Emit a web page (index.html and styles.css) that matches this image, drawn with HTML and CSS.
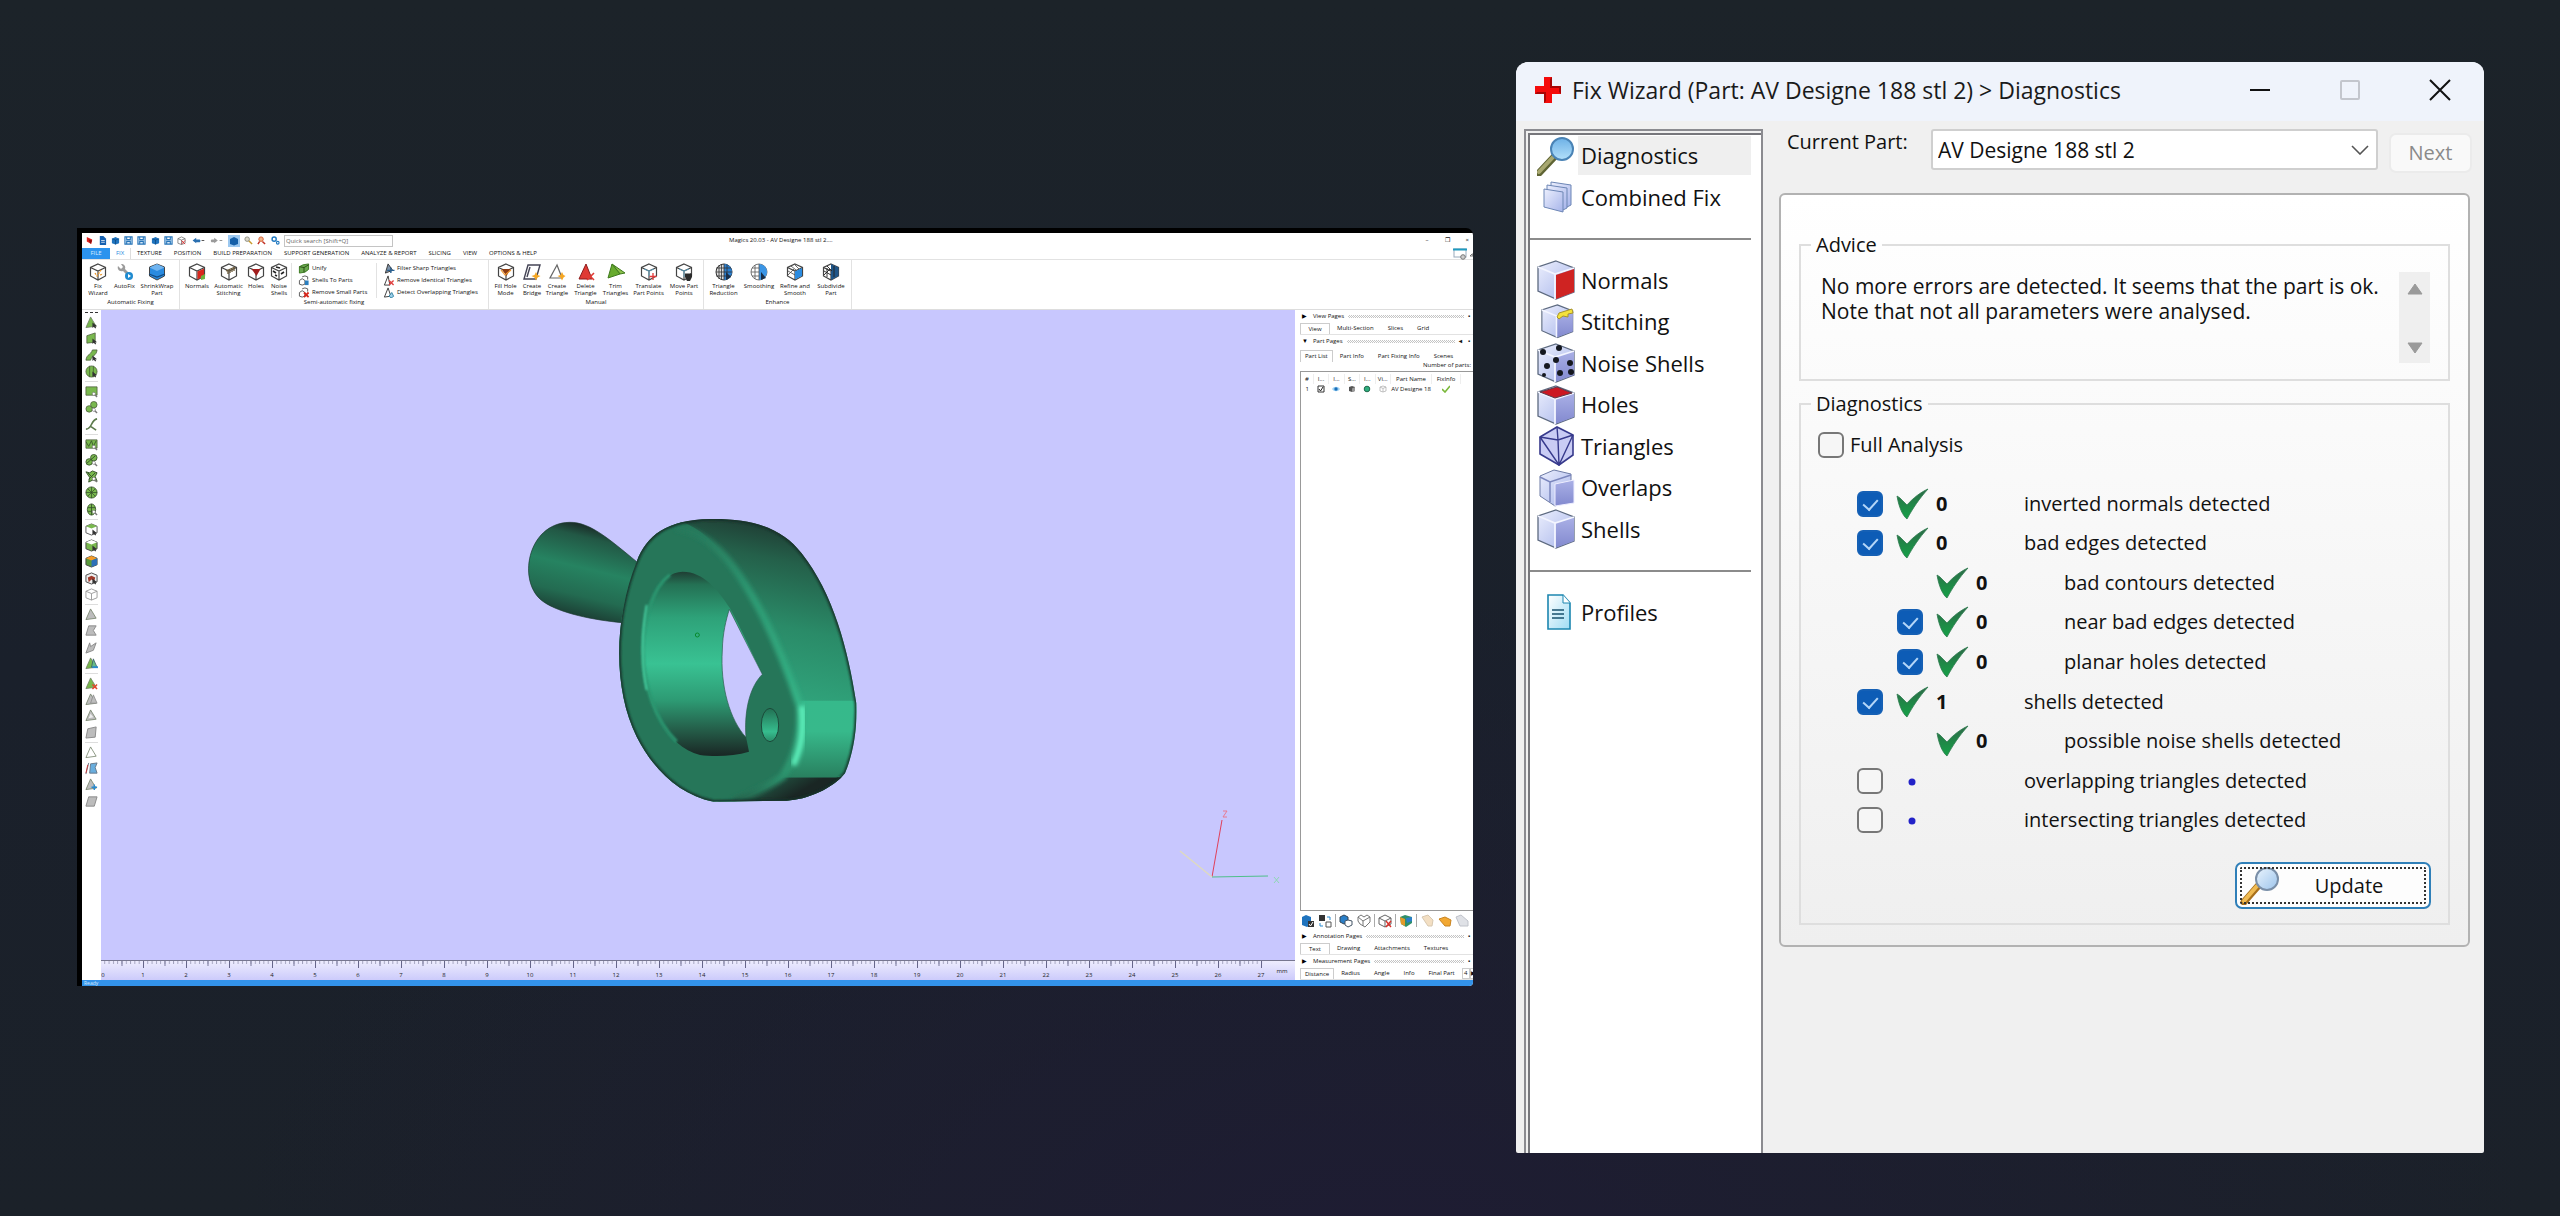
FILE: index.html
```html
<!DOCTYPE html>
<html lang="en">
<head>
<meta charset="utf-8">
<title>Magics – Fix Wizard</title>
<link rel="stylesheet" href="styles.css">
</head>
<body>
<svg class="defs" aria-hidden="true">
  <defs>
    <linearGradient id="lav" x1="0" y1="0" x2="1" y2="1"><stop offset="0" stop-color="#eceffd"/><stop offset="1" stop-color="#a6b4ea"/></linearGradient>
    <linearGradient id="lavd" x1="0" y1="0" x2="0" y2="1"><stop offset="0" stop-color="#aab0e6"/><stop offset="1" stop-color="#8289cf"/></linearGradient>
    <linearGradient id="glass" x1="0" y1="0" x2="0" y2="1"><stop offset="0" stop-color="#6db1e6"/><stop offset="1" stop-color="#b4e0fa"/></linearGradient>
    <linearGradient id="glass2" x1="0" y1="0" x2="1" y2="1"><stop offset="0" stop-color="#eaf4fd"/><stop offset="1" stop-color="#9cc4ec"/></linearGradient>
    <linearGradient id="tick" x1="0" y1="0" x2="0" y2="1"><stop offset="0" stop-color="#2d6a48"/><stop offset="1" stop-color="#14a146"/></linearGradient>
    <linearGradient id="page" x1="0" y1="0" x2="1" y2="1"><stop offset="0" stop-color="#ffffff"/><stop offset="1" stop-color="#9fdcf4"/></linearGradient>
  </defs>
  <symbol id="cube" viewBox="0 0 18 18"><path d="M9 1 16.500 4.500V13L9 17 1.500 13V4.500Z" fill="#fff"/><path d="M9 1 16.500 4.500V13L9 17 1.500 13V4.500ZM1.500 4.500 9 8 16.500 4.500M9 8V17" fill="none" stroke="#444" stroke-width="1.200"/></symbol>
  <symbol id="tri" viewBox="0 0 14 14"><path d="M6 1 1 12.500 12 11Z" fill="currentColor" stroke="#6a7a60" stroke-width=".8"/></symbol>
  <symbol id="cursor" viewBox="0 0 14 14"><path d="M8 7v6l1.500-1.500L11 13.500l1-.8-1-1.600H13z" fill="#333"/></symbol>
  <symbol id="lens" viewBox="0 0 14 14"><path d="M10 10l3 3" stroke="#777" stroke-width="1.500"/><circle cx="9.500" cy="9.500" r="1.700" fill="#fff" stroke="#777" stroke-width=".7"/></symbol>
  <symbol id="box" viewBox="0 0 38 40"><path d="M19 1 37 8V32L19 39 1 31V7Z" fill="url(#lav)" stroke="#5d6a80" stroke-width="1.300"/><path d="M18 14 37 8V32L18 39Z" fill="url(#lavd)"/><path d="M1 7 18 14 37 8M18 14V39" fill="none" stroke="#f3f5ff" stroke-width="1.800"/></symbol>
  <symbol id="ok" viewBox="0 0 33 32"><path d="M1 8 4 10 11 17C17 10 25 4 32 1 23 11 17 20 11 31 7 28 3 20 1 8Z" fill="url(#tick)" stroke="#2d7a4e" stroke-width=".8"/></symbol>
  <symbol id="save" viewBox="0 0 10 10"><path d="M1 1h8v8H1zM3 1v3h4V1M3 9V6h4v3" fill="#d5e8f8" stroke="#2674b8" stroke-width="1.200"/></symbol>
  <symbol id="bluecube" viewBox="0 0 10 10"><path d="M1 3 5 1l4 2v5L5 9.500 1 8z" fill="#1e73be"/><path d="M1 3l4 1.500L9 3M5 4.500v5" fill="none" stroke="#0d4173" stroke-width=".7"/></symbol>
</svg>

<main class="stage">
<section class="app" aria-label="Magics">
 <div class="app-body">
  <header class="app-title">
    <div class="quick">
      <svg viewBox="0 0 10 10"><path d="M2 1l6 3-1 5-5-3z" fill="#e0201b"/><path d="M4 4l4 1-2 4z" fill="#8a0f0f"/></svg>
      <svg viewBox="0 0 10 10"><path d="M2 0h4l3 3v7H2z" fill="#1661b0"/><path d="M3.500 5h4M3.500 7h4" stroke="#fff" stroke-width=".8"/></svg>
      <svg><use href="#bluecube"/></svg><svg><use href="#save"/></svg><svg><use href="#save"/></svg>
    </div>
    <div class="quick">
      <svg><use href="#bluecube"/></svg><svg><use href="#save"/></svg>
      <svg viewBox="0 0 10 10"><path d="M1 3 5 1l4 2v5L5 9.500 1 8zM1 3l4 1.500L9 3M5 4.500v5" fill="#fff" stroke="#666" stroke-width=".8"/><path d="M5 5l4 4M9 5l-4 4" stroke="#e03030"/></svg>
    </div>
    <div class="quick wide">
      <svg viewBox="0 0 14 10"><path d="M1 5l4-3v2h4c1 1 1 2 0 3H5v1z" fill="#2a6fb0"/><path d="M11 5h3" stroke="#444"/></svg>
      <svg viewBox="0 0 14 10"><path d="M9 5L5 2v2H2C1 5 1 6 2 7h3v1z" fill="#9a9a9a"/><path d="M11 5h3" stroke="#888"/></svg>
    </div>
    <div class="quick">
      <svg class="on" viewBox="0 0 10 10"><path d="M1 3 5 1l4 2v5L5 9.500 1 8z" fill="#155fa8"/></svg>
      <svg viewBox="0 0 10 10"><path d="M5 5l4 4" stroke="#c89a2c" stroke-width="1.600"/><circle cx="3.500" cy="3.500" r="2.500" fill="#dcd8c8" stroke="#8a8a80"/></svg>
      <svg viewBox="0 0 10 10"><path d="M3 6l-2 3M6 6l3 3" stroke="#c03024" stroke-width="1.600"/><circle cx="4.500" cy="3.500" r="2.500" fill="#f0b48a" stroke="#d65a30"/></svg>
    </div>
    <div class="quick">
      <svg viewBox="0 0 10 10"><circle cx="3.500" cy="3.500" r="2.300" fill="none" stroke="#1f78c0" stroke-width="1.600"/><circle cx="7.500" cy="7.500" r="1.500" fill="none" stroke="#1f78c0" stroke-width="1.200"/></svg>
      <input class="search" type="text" aria-label="Quick search" placeholder="Quick search [Shift+Q]">
    </div>
    <h1 class="app-name">Magics 20.03 - AV Designe 188 stl 2....</h1>
    <div class="app-ctl"><button>–</button><button>❐</button><button>×</button></div>
  </header>

  <nav class="tabs">
    <button class="file">FILE</button><button class="fix">FIX</button>
    <button>TEXTURE</button><button>POSITION</button><button>BUILD PREPARATION</button><button>SUPPORT GENERATION</button><button>ANALYZE &amp; REPORT</button><button>SLICING</button><button>VIEW</button><button>OPTIONS &amp; HELP</button>
    <svg class="tabs-end" viewBox="0 0 20 12"><rect x="1" y="1" width="12" height="8" fill="#fff" stroke="#9ab"/><path d="M0 1.500h14" stroke="#1f9ac0" stroke-width="2"/><circle cx="10" cy="9" r="2.300" fill="#ccc" stroke="#777"/><path d="M17 8l2-2h1v2z" fill="none" stroke="#555" stroke-width=".8"/></svg>
  </nav>

  <div class="ribbon">
    <section class="group g-auto">
      <div class="tools">
        <button><svg viewBox="0 0 18 18"><use href="#cube"/><path d="M6 10l2 3 4-6M11 12l3-1" stroke="#e8962c" stroke-width="1.300" stroke-dasharray="2 1" fill="none"/></svg>Fix<br>Wizard</button>
        <button><svg viewBox="0 0 18 18"><path d="M2 3l3 3 2-2-2-3c3 0 5 2 4 5l5 5-2 2-5-5C3 9 1 6 2 3z" fill="#9c9c9c"/><circle cx="13" cy="13" r="4" fill="#1f8bd0"/><path d="M12 11v4l3-2z" fill="#fff"/></svg>AutoFix</button>
        <button><svg viewBox="0 0 18 18"><path d="M9 1l7.500 3v9L9 17l-7.500-4V4z" fill="#2a8be0" stroke="#444"/><path d="M1.500 4.500L9 8l7.500-3.500L9 1z" fill="#6fb4f0"/><path d="M1 11l8 3 8-3" fill="none" stroke="#124a80" stroke-width="1.200"/></svg>ShrinkWrap<br>Part</button>
      </div>
      <h2>Automatic Fixing</h2>
    </section>
    <section class="group g-semi">
      <div class="tools">
        <button><svg viewBox="0 0 18 18"><use href="#cube"/><path d="M9.500 8.500 16 5.500V13l-6.500 3.500z" fill="#d8271c"/><path d="M13 13l4-2v5l-4 1z" fill="#6cb33f"/></svg>Normals</button>
        <button><svg viewBox="0 0 18 18"><use href="#cube"/><path d="M6 8l9-4M8 8v3M10 7v3M12 6v3M14 5v3" stroke="#6b5a3a" stroke-width="1.300"/></svg>Automatic<br>Stitching</button>
        <button><svg viewBox="0 0 18 18"><use href="#cube"/><path d="M4.500 6h9L9.500 13z" fill="#a11d1d"/></svg>Holes</button>
        <button><svg viewBox="0 0 18 18"><use href="#cube"/><path d="M3 8l3 2M11 11l3-2M6 4l4 1M5 12l2 1" stroke="#222" stroke-width="1.600"/></svg>Noise<br>Shells</button>
        <div class="list">
          <button><svg viewBox="0 0 12 12"><path d="M1 4l4-2 6-1v6L7 10 1 11z" fill="#6aa84f" stroke="#38761d"/><path d="M1 4l5 1 5-3M6 5v5" stroke="#274e13" fill="none"/></svg>Unify</button>
          <button><svg viewBox="0 0 12 12"><path d="M1 6l3-2 3 2v4l-3 1-3-1zM4 2l3-1 3 1v3" fill="#fff" stroke="#555"/><path d="M7 6h4v5H7z" fill="#2a7fc0"/></svg>Shells To Parts</button>
          <button><svg viewBox="0 0 12 12"><path d="M1 6l3-2 3 2v4l-3 1-3-1zM4 2l3-1 3 1v3" fill="#fff" stroke="#555"/><path d="M6 6l5 5M11 6l-5 5" stroke="#d8271c" stroke-width="2"/></svg>Remove Small Parts</button>
        </div>
        <div class="list">
          <button><svg viewBox="0 0 12 12"><path d="M5 1L2 11l8-3z" fill="#7f93a8" stroke="#333"/><path d="M4 8h8M8 5v6" stroke="#2a6090" stroke-width="1.500"/></svg>Filter Sharp Triangles</button>
          <button><svg viewBox="0 0 12 12"><path d="M5 1L1 11h6z" fill="#fff" stroke="#333"/><path d="M6 6l5 5M11 6l-5 5" stroke="#e04040" stroke-width="1.500"/></svg>Remove Identical Triangles</button>
          <button><svg viewBox="0 0 12 12"><path d="M5 1L1 11l7-1z" fill="#fff" stroke="#333"/><path d="M6 10l3-4 2 4c-1 2-4 2-5 0z" fill="#9fd0ea" stroke="#2a7fa0"/></svg>Detect Overlapping Triangles</button>
        </div>
      </div>
      <h2>Semi-automatic fixing</h2>
    </section>
    <section class="group g-manual">
      <div class="tools">
        <button><svg viewBox="0 0 18 18"><use href="#cube"/><path d="M4.500 6h9L9.500 13z" fill="#8a3b12"/><path d="M4 7l4 5 6-5" stroke="#f09a30" fill="none" stroke-width="1.200"/></svg>Fill Hole<br>Mode</button>
        <button><svg viewBox="0 0 18 18"><path d="M5 2h12l-4 14H1zM7 4L4 14" fill="#fff" stroke="#445" stroke-width="1.400"/><path d="M13 9l1.500 3 3 1-3 1.500-1.500 3-1.500-3-3-1.500 3-1z" fill="#f5a623"/></svg>Create<br>Bridge</button>
        <button><svg viewBox="0 0 18 18"><path d="M9 2L2 15h12z" fill="#fff" stroke="#666" stroke-width="1.200"/><path d="M14 9l1.500 3 2 1-2 1.500-1.500 3-1.500-3-3-1.500 3-1z" fill="#f5a623"/></svg>Create<br>Triangle</button>
        <button><svg viewBox="0 0 18 18"><path d="M9 1L2 16h13z" fill="#e03a34" stroke="#8d1b1b"/><path d="M10 10l7 7M17 10l-7 7" stroke="#e03a34" stroke-width="1.600"/></svg>Delete<br>Triangle</button>
        <button><svg viewBox="0 0 18 18"><path d="M5 1l13 9-5 1z" fill="#8bbf4a" stroke="#3f7a1e"/><path d="M5 1L1 15l12-4z" fill="#67ab2e" stroke="#3f7a1e"/></svg>Trim<br>Triangles</button>
        <button><svg viewBox="0 0 18 18"><use href="#cube"/><path d="M9 8v6M4 6l5 2 5-2" stroke="#5aa6c8" stroke-width=".8" fill="none"/><path d="M13 10v7M9.500 13.500h7" stroke="#e23a3a" stroke-width="1.300"/></svg>Translate<br>Part Points</button>
        <button><svg viewBox="0 0 18 18"><use href="#cube"/><path d="M9 8v6M4 6l5 2 5-2" stroke="#5aa6c8" stroke-width=".8" fill="none"/><path d="M10 11l1-1 1 1 1-1 1 1 1-1 2 1v3l-2 4h-3l-2-4z" fill="#2b2b2b"/></svg>Move Part<br>Points</button>
      </div>
      <h2>Manual</h2>
    </section>
    <section class="group g-enh">
      <div class="tools">
        <button><svg viewBox="0 0 18 18"><circle cx="9" cy="9" r="8" fill="#ddd" stroke="#333"/><path d="M9 1a8 8 0 010 16z" fill="#2a7fd0"/><path d="M4 2v14M6.500 1v16M9 1v16M12 2v14M1 5h15M1 9h16M1 13h15" stroke="#333" stroke-width=".8"/><path d="M11 9v8l5-3z" fill="#1a2f48"/></svg>Triangle<br>Reduction</button>
        <button><svg viewBox="0 0 18 18"><circle cx="9" cy="9" r="8" fill="#fff" stroke="#777"/><path d="M9 1a8 8 0 010 16z" fill="#3a95e6"/><path d="M5 2v14M9 1v16M1 9h8M2 5h7M2 13h7" stroke="#555" stroke-width=".8"/><path d="M11 9v8l5-2z" fill="#1a2f48"/></svg>Smoothing</button>
        <button><svg viewBox="0 0 18 18"><use href="#cube"/><path d="M9 8.500l7-3.500v8L9 16.500z" fill="#2a8be0"/><path d="M2 8l7 4M2 12l6-6M5 3l5 4M9 2l4 4" stroke="#444" stroke-width=".8"/></svg>Refine and<br>Smooth</button>
        <button><svg viewBox="0 0 18 18"><use href="#cube"/><path d="M9 1l7.500 3.500V13L9 17z" fill="#1f5588"/><path d="M2 8l7 4M2 12l6-6M5 3l5 5M5 5v9M12 3v11" stroke="#222" stroke-width=".9"/></svg>Subdivide<br>Part</button>
      </div>
      <h2>Enhance</h2>
    </section>
  </div>

  <div class="work">
    <aside class="rail" aria-label="Marking tools">
      <i class="grip"></i>
      <svg class="g" viewBox="0 0 14 14"><use href="#tri"/><use href="#cursor"/></svg>
      <svg class="g" viewBox="0 0 14 14"><path d="M2 4l9-3v10l-9 1z" fill="currentColor" stroke="#4a5a3a" stroke-width=".8"/><use href="#cursor"/></svg>
      <svg class="g" viewBox="0 0 14 14"><path d="M1 12C2 5 6 7 8 1h5c-1 7-5 5-7 11z" fill="currentColor" stroke="#4a5a3a" stroke-width=".8"/><use href="#cursor"/></svg>
      <svg class="g" viewBox="0 0 14 14"><circle cx="7" cy="7" r="6" fill="currentColor" stroke="#4a5a3a" stroke-width=".8"/><path d="M5 1v12M9 1v12" stroke="#3d5a2a" stroke-width=".8"/><use href="#cursor"/></svg>
      <hr>
      <svg class="g" viewBox="0 0 14 14"><path d="M1 2h12v9H1z" fill="currentColor" stroke="#4a5a3a" stroke-width=".8"/><use href="#lens"/></svg>
      <svg class="g" viewBox="0 0 14 14"><circle cx="4.500" cy="8.500" r="3.500" fill="currentColor" stroke="#4a5a3a" stroke-width=".8"/><circle cx="9.500" cy="4" r="3.500" fill="currentColor" stroke="#4a5a3a" stroke-width=".8"/><use href="#lens"/></svg>
      <svg class="g" viewBox="0 0 14 14"><path d="M1 12c7 0 5-10 12-11M6 9l6 4" fill="none" stroke="#5c7a4c" stroke-width="1.800"/></svg>
      <hr>
      <svg class="g" viewBox="0 0 14 14"><path d="M1 2h12v9H1z" fill="currentColor" stroke="#4a5a3a" stroke-width=".8"/><path d="M1 4l3 5 3-6 2 6 3-6" fill="none" stroke="#35502a" stroke-width=".9"/><use href="#lens"/></svg>
      <svg class="g" viewBox="0 0 14 14"><circle cx="4.500" cy="8.500" r="3.500" fill="currentColor" stroke="#35502a" stroke-width=".9"/><circle cx="9.500" cy="4" r="3.500" fill="currentColor" stroke="#35502a" stroke-width=".9"/><path d="M2 10l9-8" stroke="#35502a"/><use href="#lens"/></svg>
      <svg class="g" viewBox="0 0 14 14"><path d="M1 2l4 1 3-2 5 2-2 4 2 5-5-1-4 2 1-5z" fill="currentColor" stroke="#35502a"/><path d="M3 3l8 8M11 3l-7 7" stroke="#35502a"/><use href="#lens"/></svg>
      <svg class="g" viewBox="0 0 14 14"><circle cx="7" cy="7" r="6" fill="currentColor" stroke="#35502a" stroke-width=".9"/><path d="M7 1v12M1 7h12M3 3l8 8M11 3l-8 8" stroke="#35502a" stroke-width=".8"/></svg>
      <svg class="g" viewBox="0 0 14 14"><ellipse cx="7" cy="7" rx="4.500" ry="6" fill="currentColor" stroke="#35502a" stroke-width=".9"/><path d="M7 1v12M3 5h8M3 9h8" stroke="#35502a" stroke-width=".9"/><use href="#lens"/></svg>
      <hr>
      <svg class="g" viewBox="0 0 14 14"><path d="M7 1l6 2.500v7L7 13l-6-2.500v-7z" fill="#fff" stroke="#555"/><path d="M7 1l6 2.500L7 6 1 3.500z" fill="currentColor"/><use href="#cursor"/></svg>
      <svg class="g" viewBox="0 0 14 14"><path d="M7 1l6 2.500v7L7 13l-6-2.500v-7z" fill="currentColor" stroke="#444"/><path d="M7 1l6 2.500L7 6 1 3.500z" fill="#fff"/><use href="#cursor"/></svg>
      <svg class="g" viewBox="0 0 14 14"><path d="M7 1l6 2.500v7L7 13l-6-2.500v-7z" fill="#5a9a3c" stroke="#444"/><path d="M7 1l6 2.500L7 6 1 3.500z" fill="#f39a2b"/><path d="M7 6l6-2.500v7L7 13z" fill="#2c6fb8"/></svg>
      <svg class="g" viewBox="0 0 14 14"><path d="M7 1l6 2.500v7L7 13l-6-2.500v-7z" fill="#eee" stroke="#444"/><path d="M3 6l4-2 4 2-1 4-3-2-3 3z" fill="#a03a2a"/><use href="#cursor"/></svg>
      <svg class="n" viewBox="0 0 14 14"><path d="M7 1l6 2.500v7L7 13l-6-2.500v-7zM1 3.500L7 6l6-2.500M7 6v7" fill="#fff" stroke="#999"/></svg>
      <hr>
      <svg class="n" viewBox="0 0 14 14"><use href="#tri"/></svg>
      <svg class="n" viewBox="0 0 14 14"><path d="M4 2h8l-3 5 3 5H1z" fill="currentColor" stroke="#888"/></svg>
      <svg class="n" viewBox="0 0 14 14"><path d="M5 2l1 4 6-4-3 8-8 3z" fill="currentColor" stroke="#888"/></svg>
      <svg class="g" viewBox="0 0 14 14"><use href="#tri"/><path d="M9 2l-2 9h6z" fill="#6b8" stroke="#356" stroke-width=".8"/><path d="M8 10h6v2H8z" fill="#2a8bd0"/></svg>
      <hr>
      <svg class="g" viewBox="0 0 14 14"><use href="#tri"/><path d="M8 8l5 5M13 8l-5 5" stroke="#e5452c" stroke-width="1.600"/></svg>
      <svg class="n" viewBox="0 0 14 14"><use href="#tri"/><path d="M9 2l-3 9h7z" fill="currentColor" stroke="#888" stroke-width=".8"/></svg>
      <svg class="n" viewBox="0 0 14 14"><use href="#tri"/><path d="M6 5l-2 5 5-1z" fill="#eee"/></svg>
      <svg class="n" viewBox="0 0 14 14"><path d="M3 3l9-2-1 11-10 1z" fill="currentColor" stroke="#888"/></svg>
      <hr>
      <svg class="w" viewBox="0 0 14 14"><use href="#tri"/></svg>
      <svg class="n" viewBox="0 0 14 14"><path d="M4 1L1 13M6 2l7-1-2 5 2 6H5z" fill="#69aede" stroke="#678"/><path d="M3 3l-2 9" stroke="#c33"/></svg>
      <svg class="n" viewBox="0 0 14 14"><use href="#tri"/><path d="M10 7v6M7 10h6" stroke="#2a8bd0" stroke-width="1.600"/></svg>
      <svg class="n" viewBox="0 0 14 14"><path d="M4 2h9l-3 10H1z" fill="currentColor" stroke="#888"/></svg>
    </aside>

    <div class="view">
      <svg class="scene" viewBox="101 310 1194 650" role="img" aria-label="Part AV Designe 188 stl 2">
        <defs>
          <linearGradient id="hand" gradientUnits="userSpaceOnUse" x1="290" y1="115" x2="225" y2="385"><stop offset="0" stop-color="#1b2f2a"/><stop offset=".12" stop-color="#225845"/><stop offset=".45" stop-color="#268361"/><stop offset=".75" stop-color="#236b51"/><stop offset="1" stop-color="#1b3a31"/></linearGradient>
          <linearGradient id="side" gradientUnits="userSpaceOnUse" x1="850" y1="100" x2="740" y2="640"><stop offset="0" stop-color="#1f3a32"/><stop offset=".2" stop-color="#24604a"/><stop offset=".55" stop-color="#2a8b68"/><stop offset="1" stop-color="#31a77e"/></linearGradient>
          <linearGradient id="wall" gradientUnits="userSpaceOnUse" x1="0" y1="245" x2="0" y2="798"><stop offset="0" stop-color="#1f3d33"/><stop offset=".07" stop-color="#247154"/><stop offset=".25" stop-color="#2ea279"/><stop offset=".5" stop-color="#39c293"/><stop offset=".7" stop-color="#2d9a73"/><stop offset=".88" stop-color="#235543"/><stop offset="1" stop-color="#192624"/></linearGradient>
          <linearGradient id="under" gradientUnits="userSpaceOnUse" x1="800" y1="850" x2="850" y2="935"><stop offset="0" stop-color="#24604a"/><stop offset="1" stop-color="#1a2624"/></linearGradient>
          <linearGradient id="cap" gradientUnits="userSpaceOnUse" x1="0" y1="632" x2="0" y2="862"><stop offset="0" stop-color="#36b98b"/><stop offset=".4" stop-color="#37b98b"/><stop offset="1" stop-color="#29805f"/></linearGradient>
          <linearGradient id="ridge" gradientUnits="userSpaceOnUse" x1="0" y1="112" x2="0" y2="935"><stop offset="0" stop-color="#27785b"/><stop offset=".25" stop-color="#2d9a73"/><stop offset=".65" stop-color="#35b386"/><stop offset=".9" stop-color="#2c946e"/><stop offset="1" stop-color="#24604a"/></linearGradient>
          <linearGradient id="pin" x1="0" y1="0" x2="0" y2="1"><stop offset="0" stop-color="#227053"/><stop offset=".7" stop-color="#36bd8e"/><stop offset="1" stop-color="#2a8b68"/></linearGradient>
          <filter id="soft" x="-20%" y="-20%" width="140%" height="140%"><feGaussianBlur stdDeviation="7"/></filter>
          <filter id="soft2" x="-50%" y="-20%" width="200%" height="140%"><feGaussianBlur stdDeviation="3"/></filter>
          <clipPath id="outline"><path d="M410 215C440 135 500 90 630 87 770 85 850 120 905 190 1000 310 1045 480 1069 640 1072 720 1060 790 1035 850 1000 895 920 930 860 932L640 935C540 915 460 840 410 740 340 600 340 390 410 215Z"/></clipPath>
        </defs>
        <g transform="translate(500 490) scale(.33333)">
          <path d="M208 97C270 95 330 150 410 215L366 398C280 390 180 370 130 335 50 280 80 100 208 97Z" fill="url(#hand)" stroke="#1c3a31" stroke-width="2"/>
          <g clip-path="url(#outline)">
            <path d="M340 80H1080V940H340Z" fill="url(#side)"/>
            <path d="M850 862H1050V940H640Z" fill="url(#under)"/>
            <path d="M895 632H1072V700L1035 850 1010 862H850Z" fill="url(#cap)"/>
            <path d="M340 80H480C620 90 700 220 790 380 835 470 870 560 897 650 905 740 890 800 850 862 800 900 740 925 690 940H340Z" fill="#267659"/>
            <path d="M530 112C640 130 715 235 790 380 835 470 870 560 900 650 905 740 885 800 848 860 790 900 740 920 700 935" fill="none" stroke="url(#ridge)" stroke-width="22" filter="url(#soft)"/>
            <path d="M906 648C912 720 905 770 880 825" fill="none" stroke="#5df0bb" stroke-width="18" filter="url(#soft)"/>
            <path d="M410 215C440 135 500 90 630 87 770 85 850 120 905 190 1000 310 1045 480 1069 640 1072 720 1060 790 1035 850 1000 895 920 930 860 932L640 935C540 915 460 840 410 740 340 600 340 390 410 215Z" fill="none" stroke="#183029" stroke-width="10" filter="url(#soft2)"/>
          </g>
          <path d="M548 245C610 245 655 300 690 355 740 450 765 510 787 553 750 590 732 660 738 740L747 785C700 800 640 800 600 795 500 770 428 640 428 480 430 350 480 245 548 245Z" fill="url(#wall)"/>
          <path d="M510 255C460 290 430 380 428 480 430 590 465 690 530 755" fill="none" stroke="#2b9670" stroke-width="10" filter="url(#soft2)"/>
          <path d="M440 345C424 430 424 530 440 600" fill="none" stroke="#4cdcaa" stroke-width="5" filter="url(#soft2)"/>
          <path d="M688 358 787 553C750 590 732 660 738 742 690 690 660 590 667 480 668 430 678 390 688 358Z" fill="#c8c7fe" stroke="#2a5a4a" stroke-width="2"/>
          <ellipse cx="810" cy="705" rx="26" ry="50" fill="url(#pin)" stroke="#1c4a3a" stroke-width="3"/>
          <circle cx="592" cy="435" r="6" fill="none" stroke="#078a2c" stroke-width="3"/>
        </g>
        <g fill="none" stroke-width="1">
          <path d="M1212 877 1222 820" stroke="#e0405a"/><path d="M1212 877 1268 876" stroke="#4fbf8a"/><path d="M1212 877 1180 851" stroke="#dedac0" stroke-width="1.500"/>
          <path d="M1223 811h4l-4 6h4" stroke="#e87a90"/><path d="M1274 877l5 6M1279 877l-5 6" stroke="#8fd8b4"/>
        </g>
      </svg>
      <svg class="ruler" viewBox="101 960 1194 20" aria-label="Ruler, mm">
        <defs>
          <linearGradient id="rul" x1="0" y1="0" x2="0" y2="1"><stop offset="0" stop-color="#efeefe"/><stop offset="1" stop-color="#cccbfb"/></linearGradient>
          <pattern id="t1" patternUnits="userSpaceOnUse" x="100" y="960" width="4.300" height="20"><path d="M.5 0V4" stroke="#8a8aa8" stroke-width=".8"/></pattern>
          <pattern id="t5" patternUnits="userSpaceOnUse" x="100" y="960" width="21.500" height="20"><path d="M.5 0V6" stroke="#77779a"/></pattern>
          <pattern id="t10" patternUnits="userSpaceOnUse" x="100" y="960" width="43" height="20"><path d="M.5 0V8" stroke="#66668a"/></pattern>
        </defs>
        <path d="M101 960H1295V980H101Z" fill="url(#rul)"/>
        <path d="M101 960H1263V980H101Z" fill="url(#t1)"/><path d="M101 960H1263V980H101Z" fill="url(#t5)"/><path d="M101 960H1263V980H101Z" fill="url(#t10)"/>
        <path d="M101 960.500H1295" stroke="#777790"/>
        <g class="nums"><text x="103" y="977">0</text><text x="143" y="977">1</text><text x="186" y="977">2</text><text x="229" y="977">3</text><text x="272" y="977">4</text><text x="315" y="977">5</text><text x="358" y="977">6</text><text x="401" y="977">7</text><text x="444" y="977">8</text><text x="487" y="977">9</text><text x="530" y="977">10</text><text x="573" y="977">11</text><text x="616" y="977">12</text><text x="659" y="977">13</text><text x="702" y="977">14</text><text x="745" y="977">15</text><text x="788" y="977">16</text><text x="831" y="977">17</text><text x="874" y="977">18</text><text x="917" y="977">19</text><text x="960" y="977">20</text><text x="1003" y="977">21</text><text x="1046" y="977">22</text><text x="1089" y="977">23</text><text x="1132" y="977">24</text><text x="1175" y="977">25</text><text x="1218" y="977">26</text><text x="1261" y="977">27</text><text x="1282" y="973">mm</text></g>
      </svg>
    </div>

    <aside class="pages">
      <h3 class="bar"><span class="arrow">▶</span>View Pages<i></i><b>▪</b></h3>
      <div class="ptabs"><button class="on">View</button><button>Multi-Section</button><button>Slices</button><button>Grid</button></div>
      <h3 class="bar"><span class="arrow">▼</span>Part Pages<i></i><b>◂</b><b>▪</b></h3>
      <div class="ptabs roomy"><button class="on">Part List</button><button>Part Info</button><button>Part Fixing Info</button><button>Scenes</button></div>
      <p class="count">Number of parts:</p>
      <div class="parts">
        <table>
          <thead><tr><th>#</th><th>I...</th><th>I...</th><th>S...</th><th>I...</th><th>Vi...</th><th>Part Name</th><th>FixInfo</th></tr></thead>
          <tbody><tr><td>1</td>
            <td><svg viewBox="0 0 8 8"><path d="M1 1h6v6H1z" fill="#fff" stroke="#333"/><path d="M2 4l1.500 2L6 2" fill="none" stroke="#222"/></svg></td>
            <td><svg viewBox="0 0 8 8"><path d="M0 4c2-3 6-3 8 0-2 3-6 3-8 0z" fill="#9fd3f5"/><circle cx="4" cy="4" r="1.700" fill="#1b6fb8"/></svg></td>
            <td><svg viewBox="0 0 8 8"><path d="M1 2l3-1 3 1v4L4 7 1 6z" fill="#555"/><path d="M4 3.500L7 2v4L4 7z" fill="#999"/></svg></td>
            <td><svg viewBox="0 0 8 8"><circle cx="4" cy="4" r="2.800" fill="#2fae7e" stroke="#1f6a4c"/></svg></td>
            <td><svg viewBox="0 0 8 8"><path d="M1 2l3-1 3 1v4L4 7 1 6zM1 2l3 1.500L7 2M4 3.500V7" fill="none" stroke="#aaa" stroke-width=".7"/></svg></td>
            <td>AV Designe 18</td>
            <td><svg viewBox="0 0 8 8"><path d="M0 4l3 3 5-6" fill="none" stroke="#7ab83a" stroke-width="1.600"/></svg></td></tr></tbody>
        </table>
      </div>
      <div class="ptools">
        <svg viewBox="0 0 14 14"><path d="M1 3l4-2 5 2v8l-4 2-5-2z" fill="#1e73be"/><path d="M7 7h6v6H7z" fill="#333"/><path d="M8 10l1.500 2L12 8" stroke="#fff" fill="none"/></svg>
        <svg viewBox="0 0 14 14"><path d="M1 1h6v6H1z" fill="#333"/><path d="M8 8h5v5H8z" fill="#fff" stroke="#555"/><path d="M9 3h3v3M2 9v3h3" fill="none" stroke="#2a8bd0"/></svg><hr>
        <svg viewBox="0 0 14 14"><path d="M1 3l4-2 4 2v5l-4 2-4-2z" fill="#2a7fc8" stroke="#345"/><path d="M6 7l3-1 4 1v4l-4 2-3-2z" fill="#fff" stroke="#456"/></svg>
        <svg viewBox="0 0 14 14"><path d="M1 3l3-2 3 2 3-2 3 2v5l-5 5-5-3-2-3z" fill="#fff" stroke="#777"/><path d="M1 3l5 4 7-4M6 7v5" fill="none" stroke="#777"/></svg><hr>
        <svg viewBox="0 0 14 14"><path d="M1 4l6-3 6 3v6l-6 3-6-3zM1 4l6 3 6-3M7 7v6" fill="#fff" stroke="#666"/><path d="M8 7l5 6M13 7l-5 6" stroke="#d8302a" stroke-width="1.400"/></svg><hr>
        <svg viewBox="0 0 14 14"><path d="M1 3l5-2 7 2v6l-6 4-5-3z" fill="#2f8f6a"/><path d="M1 3l5 2v7l-4-2z" fill="#e39a2a"/><path d="M7 4l6-1v4l-5 2z" fill="#2a7fc8"/></svg><hr>
        <svg viewBox="0 0 14 14"><path d="M1 3l6-2 5 5-1 6H7z" fill="#f3dfc3" stroke="#d8c8b0"/></svg>
        <svg viewBox="0 0 14 14"><path d="M1 5l6-2 6 3-1 6H7z" fill="#f2a832" stroke="#c98420"/></svg>
        <svg viewBox="0 0 14 14"><path d="M1 3l5-2 7 6v5H5z" fill="#dfe1e6" stroke="#bfc2ca"/></svg>
      </div>
      <h3 class="bar"><span class="arrow">▶</span>Annotation Pages<i></i><b>▪</b></h3>
      <div class="ptabs"><button class="on">Text</button><button>Drawing</button><button>Attachments</button><button>Textures</button></div>
      <h3 class="bar"><span class="arrow">▶</span>Measurement Pages<i></i><b>▪</b></h3>
      <div class="ptabs"><button class="on">Distance</button><button>Radius</button><button>Angle</button><button>Info</button><button>Final Part</button><button class="spin">4</button><button class="spin">▶</button></div>
    </aside>
  </div>
  <footer class="status">Ready</footer>
 </div>
</section>

<section class="wizard" aria-label="Fix Wizard">
  <header class="wiz-title">
    <svg class="cross" viewBox="0 0 28 28"><path d="M10 1h8v9h9v8h-9v9h-8v-9H1v-8h9z" fill="#f40b0b"/><path d="M18 1v9h9v8l-2-2V12h-9V3zM10 27v-9l-9 0 2-2h9v9z" fill="#a80505"/></svg>
    <h1>Fix Wizard (Part: AV Designe 188 stl 2) &gt; Diagnostics</h1>
    <div class="wiz-ctl">
      <button aria-label="Minimize"><svg viewBox="0 0 22 22"><path d="M1 11H21" stroke="#111" stroke-width="2"/></svg></button>
      <button aria-label="Maximize" disabled><svg viewBox="0 0 22 22"><rect x="2" y="2" width="18" height="18" rx="1" fill="none" stroke="#c3c6cd" stroke-width="2"/></svg></button>
      <button aria-label="Close"><svg viewBox="0 0 22 22"><path d="M1 1 21 21M21 1 1 21" stroke="#111" stroke-width="2"/></svg></button>
    </div>
  </header>
  <div class="wiz-body">
    <nav class="side"><ul>
      <li class="cur"><svg viewBox="0 0 38 40"><path d="M2 37 18 20" stroke="#5f6434" stroke-width="7" stroke-linecap="round"/><path d="M2 36 18 19" stroke="#a8a870" stroke-width="4" stroke-linecap="round"/><circle cx="25" cy="13" r="11" fill="url(#glass)" stroke="#4a83b5" stroke-width="2"/></svg><a href="#diag">Diagnostics</a></li>
      <li><svg viewBox="0 0 38 40"><g fill="url(#lav)" stroke="#6d86b5"><path d="M14 5 34 8V28L30 30 14 26Z"/><path d="M10 8 30 11V31L26 33 10 29Z"/><path d="M7 12 26 15V35L7 30Z"/></g></svg><a href="#diag">Combined Fix</a></li>
      <li class="line"></li>
      <li><svg viewBox="0 0 38 40"><use href="#box"/><path d="M19 15 37 9V32L19 39Z" fill="#cf2322"/></svg><a href="#diag">Normals</a></li>
      <li><svg viewBox="0 0 38 40"><g transform="translate(4 2) scale(.86)"><use href="#box" width="38" height="40"/></g><path d="M20 15 22 11 35 7 36 11 31 12 31 15 26 14 22 17Z" fill="#f4e23c" stroke="#a8942a"/></svg><a href="#diag">Stitching</a></li>
      <li><svg viewBox="0 0 38 40"><use href="#box"/><g fill="#15181f"><circle cx="6" cy="9" r="3"/><circle cx="22" cy="5" r="3"/><circle cx="19" cy="17" r="3"/><circle cx="10" cy="23" r="3"/><circle cx="33" cy="20" r="3"/><circle cx="23" cy="30" r="3"/><circle cx="34" cy="29" r="3"/><circle cx="7" cy="32" r="2"/></g></svg><a href="#diag">Noise Shells</a></li>
      <li><svg viewBox="0 0 38 40"><use href="#box"/><path d="M3 7 20 2 35 8 18 13Z" fill="#cc1722" stroke="#5b3a4a"/></svg><a href="#diag">Holes</a></li>
      <li><svg viewBox="0 0 38 40"><path d="M3 11 20 1 36 9V29L22 39 3 28Z" fill="#c9ccf4" stroke="#373a8c" stroke-width="1.600"/><path d="M3 11 21 14 36 9M21 14 22 39M3 11 22 39 36 9M20 1 21 14" fill="none" stroke="#373a8c" stroke-width="1.400"/></svg><a href="#diag">Triangles</a></li>
      <li><svg viewBox="0 0 38 40"><path d="M3 8 17 2 34 6V32L18 38 3 28Z" fill="url(#lav)" stroke="#6d7ba5"/><path d="M3 9 13 14 34 7M13 14V34" fill="none" stroke="#7b86bd" stroke-width="1.500"/><path d="M18 16 37 12V35L18 38Z" fill="url(#lavd)" stroke="#eef"/></svg><a href="#diag">Overlaps</a></li>
      <li><svg viewBox="0 0 38 40"><use href="#box"/></svg><a href="#diag">Shells</a></li>
      <li class="line"></li>
      <li><svg viewBox="0 0 38 40"><path d="M11 3H26L33 11V37H11Z" fill="url(#page)" stroke="#1c86b0" stroke-width="1.600"/><path d="M26 3V11H33" fill="#fff" stroke="#1c86b0"/><path d="M15 18H27M15 22H27M15 26H27" stroke="#17506e" stroke-width="1.600"/></svg><a href="#diag">Profiles</a></li>
    </ul></nav>

    <div class="main" id="diag">
      <div class="part-row">
        <label for="part">Current Part:</label>
        <div class="combo"><select id="part"><option>AV Designe 188 stl 2</option></select><svg viewBox="0 0 18 10"><path d="M1 1 9 9 17 1" fill="none" stroke="#555" stroke-width="1.600"/></svg></div>
        <button class="next" disabled>Next</button>
      </div>
      <div class="panel">
        <fieldset>
          <legend>Advice</legend>
          <div class="advice">
            <p>No more errors are detected. It seems that the part is ok.<br>Note that not all parameters were analysed.</p>
            <div class="scroll"><button aria-label="Scroll up"><svg viewBox="0 0 16 12"><path d="M8 1 15 11H1Z" fill="#9a9a9a" stroke="#9a9a9a" stroke-linejoin="round"/></svg></button><button aria-label="Scroll down"><svg viewBox="0 0 16 12"><path d="M8 11 15 1H1Z" fill="#9a9a9a" stroke="#9a9a9a" stroke-linejoin="round"/></svg></button></div>
          </div>
        </fieldset>
        <fieldset class="diag">
          <legend>Diagnostics</legend>
          <label class="full"><input type="checkbox">Full Analysis</label>
          <ul class="checks">
            <li><input id="c1" type="checkbox" checked><svg><use href="#ok"/></svg><b>0</b><label for="c1">inverted normals detected</label></li>
            <li><input id="c2" type="checkbox" checked><svg><use href="#ok"/></svg><b>0</b><label for="c2">bad edges detected</label></li>
            <li class="sub"><i></i><svg><use href="#ok"/></svg><b>0</b><span>bad contours detected</span></li>
            <li class="sub"><input id="c3" type="checkbox" checked><svg><use href="#ok"/></svg><b>0</b><label for="c3">near bad edges detected</label></li>
            <li class="sub"><input id="c4" type="checkbox" checked><svg><use href="#ok"/></svg><b>0</b><label for="c4">planar holes detected</label></li>
            <li><input id="c5" type="checkbox" checked><svg><use href="#ok"/></svg><b>1</b><label for="c5">shells detected</label></li>
            <li class="sub"><i></i><svg><use href="#ok"/></svg><b>0</b><span>possible noise shells detected</span></li>
            <li><input id="c6" type="checkbox"><svg viewBox="0 0 33 32"><circle cx="16" cy="17" r="3.500" fill="#2222c8"/></svg><b></b><label for="c6">overlapping triangles detected</label></li>
            <li><input id="c7" type="checkbox"><svg viewBox="0 0 33 32"><circle cx="16" cy="17" r="3.500" fill="#2222c8"/></svg><b></b><label for="c7">intersecting triangles detected</label></li>
          </ul>
          <button class="update"><svg viewBox="0 0 40 38"><path d="M4 35 18 19" stroke="#a8701c" stroke-width="7" stroke-linecap="round"/><path d="M4 34 17 19" stroke="#f0bb52" stroke-width="4" stroke-linecap="round"/><circle cx="27" cy="12" r="11" fill="url(#glass2)" stroke="#7a8fa8" stroke-width="2"/></svg><span>Update</span></button>
        </fieldset>
      </div>
    </div>
  </div>
</section>
</main>
</body>
</html>
```
FILE: styles.css
```css
* { box-sizing: border-box; }
body {
  margin: 0;
  min-height: 100vh;
  font-family: "Open Sans", "Noto Sans", sans-serif;
  color: #111;
  background:
    radial-gradient(ellipse 45% 55% at 54% 104%, #1e1c33 0%, rgba(30, 28, 51, 0) 100%),
    linear-gradient(180deg, #1c2329 0%, #1a202b 55%, #1b2129 100%);
}
h1, h2, h3, p, ul { margin: 0; padding: 0; font-weight: 400; }
ul { list-style: none; }
button, input, select { font: inherit; color: inherit; }
button { border: 0; padding: 0; background: none; }
hr { margin: 0; border: 0; }
svg { display: block; flex: none; }
.defs { position: absolute; width: 0; height: 0; }

.stage {
  display: grid;
  grid-template-columns: 1396fr 968fr;
  align-items: start;
  column-gap: 43px;
  padding: 62px 76px 63px 77px;
}

/* ---------- Magics window ---------- */
.app {
  margin-top: 166px;
  padding: 5px 0 0 5px;
  background: #000;
  border-radius: 0 7px 4px 0;
  overflow: hidden;
  font-size: 6px;
  line-height: 7px;
}
.app-body { background: #fff; color: #111; }
.app-title { display: flex; align-items: center; height: 15px; padding-left: 3px; }
.quick { display: flex; align-items: center; gap: 4px; margin-right: 5px; }
.quick svg { width: 9px; height: 9px; }
.quick.wide svg { width: 14px; }
.quick svg.on { width: 12px; height: 12px; padding: 1px; background: #9cc8f0; }
.search { width: 109px; height: 12px; padding: 0 1px; border: 1px solid #c4c4c4; color: #777; }
.search::placeholder { color: #666; opacity: 1; }
.app-name { flex: 1; padding-left: 331px; font-size: 6px; white-space: nowrap; }
.app-ctl { display: flex; gap: 16px; padding-right: 4px; }

.tabs { display: flex; align-items: center; gap: 12px; height: 12px; border-bottom: 1px solid #e2e2e2; }
.tabs button { white-space: nowrap; line-height: 11px; }
.tabs .file { width: 28px; background: #2b93ee; color: #d8ecff; margin-right: -12px; }
.tabs .fix { width: 21px; margin-right: -6px; border-right: 1px solid #ddd; color: #2b8be0; }
.tabs-end { width: 20px; height: 12px; margin-left: auto; }

.ribbon { display: flex; height: 50px; border-bottom: 1px solid #ddd; }
.group { display: flex; flex-direction: column; justify-content: space-between; padding: 3px 2px; border-right: 1px solid #e2e2e2; }
.group h2 { font-size: 6px; line-height: 7px; text-align: center; }
.tools { display: grid; align-items: start; }
.tools > button { display: flex; flex-direction: column; align-items: center; line-height: 7px; white-space: nowrap; }
.tools > button svg { width: 18px; height: 18px; margin-bottom: 2px; }
.g-auto .tools { grid-template-columns: 28px 25px 40px; }
.g-semi .tools { grid-template-columns: 30px 33px 22px 24px 85px 110px; }
.g-manual .tools { grid-template-columns: 29px 24px 26px 31px 29px 37px 34px; }
.g-enh .tools { grid-template-columns: 35px 36px 36px 36px; }
.list { display: grid; gap: 1px; padding-left: 6px; border-left: 1px solid #e2e2e2; }
.list button { display: flex; align-items: center; gap: 2px; height: 11px; white-space: nowrap; }
.list svg { width: 12px; height: 11px; }

.work { display: grid; grid-template-columns: 19px 1fr 178px; }
.rail { display: flex; flex-direction: column; justify-content: space-between; align-items: center; padding: 2px 0 172px; }
.rail svg { width: 13px; height: 13px; }
.rail hr { width: 13px; height: 1px; background: #ddd; }
.rail .grip { width: 13px; border-top: 1px dashed #333; }
.rail .g { color: #79b84e; }
.rail .n { color: #bcbcbc; }
.rail .w { color: #fff; }

.view { display: flex; flex-direction: column; background: #c8c7fe; }
.scene, .ruler { width: 100%; height: auto; }
.nums { font-size: 6px; fill: #222; text-anchor: middle; }

.pages { display: flex; flex-direction: column; padding-left: 5px; background: #fff; overflow: hidden; min-width: 0; }
.bar { display: flex; align-items: center; gap: 4px; height: 13px; padding: 0 0 0 2px; font-size: 6px; white-space: nowrap; }
.bar .arrow { width: 7px; color: #000; }
.bar i { flex: 1; height: 3px; background: repeating-conic-gradient(#c4c4c4 0 25%, #fff 0 50%) 0 0 / 2px 2px; }
.bar b { width: 5px; }
.ptabs { display: flex; align-items: stretch; height: 12px; border-bottom: 1px solid #e2e2e2; }
.ptabs button { flex: none; padding: 0 7px; white-space: nowrap; }
.ptabs .on { min-width: 30px; padding: 0 4px; border: 1px solid #ccc; border-bottom: 0; }
.ptabs.roomy { height: 14px; padding-top: 2px; border: 0; }
.ptabs .spin { width: 8px; padding: 0; border: 1px solid #ccc; }
.count { height: 9px; text-align: right; padding-right: 2px; }
.parts { flex: 1; border: 1px solid #999; border-right: 0; }
.parts table { width: 160px; border-collapse: collapse; table-layout: fixed; margin-top: 2px; }
.parts th, .parts td { width: 15px; height: 10px; padding: 0; font-weight: 400; text-align: center; white-space: nowrap; overflow: hidden; border-right: 1px solid #eee; }
.parts td { border: 0; }
.parts th:nth-child(1) { width: 12px; }
.parts th:nth-child(7) { width: 40px; }
.parts th:nth-child(8) { width: 28px; }
.parts svg { width: 8px; height: 8px; margin: 0 auto; }
.ptools { display: flex; align-items: center; justify-content: space-between; height: 19px; padding: 0 4px 0 1px; }
.ptools svg { width: 14px; height: 14px; }
.ptools hr { width: 1px; height: 13px; background: #aaa; }
.status { height: 6px; padding-left: 2px; background: #3393ea; color: #d8ecff; font-size: 5px; line-height: 6px; }

/* ---------- Fix Wizard dialog ---------- */
.wizard { background: #f0f0f0; border-radius: 12px 12px 2px 2px; overflow: hidden; font-size: 20px; line-height: 26px; }
.wiz-title { display: flex; align-items: center; height: 59px; padding: 0 33px 3px 18px; background: #eff3fb; }
.cross { width: 28px; height: 28px; }
.wiz-title h1 { flex: 1; padding-left: 10px; font-size: 23px; white-space: nowrap; color: #1a1a1a; }
.wiz-ctl { display: flex; gap: 68px; }
.wiz-ctl svg { width: 22px; height: 22px; }
.wiz-body { display: grid; grid-template-columns: 239px 1fr; gap: 16px; padding: 8px 0 0 8px; }

.side { padding: 2px 0 0 2px; border: 2px solid #8b8b90; border-bottom: 0; }
.side ul { display: grid; grid-template-rows: repeat(12, 83fr) 1040fr; height: 100%; padding-right: 10px; border: solid #77777c; border-width: 2px 0 0 2px; background: #fff; }
.side li { display: flex; align-items: center; gap: 3px; padding-left: 7px; font-size: 22px; }
.side li svg { width: 38px; height: 40px; }
.side a { flex: 1; padding: 6px 3px; color: inherit; text-decoration: none; line-height: 27px; white-space: nowrap; }
.side .cur a { background: #efefef; }
.side .line::before { content: ""; flex: 1; height: 2px; margin-left: -7px; background: #8b8b8b; }

.main { padding-bottom: 206px; min-width: 0; }
.part-row { display: flex; align-items: flex-start; height: 44px; padding: 0 12px 0 8px; margin-bottom: 20px; }
.part-row > label { width: 144px; }
.combo { position: relative; flex: 1; }
.combo select { width: 100%; height: 41px; padding: 0 5px; border: 2px solid #cfcfcf; border-radius: 3px; background: #fff; font-size: 21px; appearance: none; }
.combo svg { position: absolute; right: 9px; top: 16px; width: 18px; height: 10px; pointer-events: none; }
.next { width: 83px; height: 40px; margin: 4px 0 0 11px; border: 2px solid #ebebeb; border-radius: 7px; background: #f9f9f9; color: #8a8a8a; }
.panel { margin-right: 14px; padding: 37px 18px 20px; border: 2px solid #b2b2b2; border-radius: 6px; background: linear-gradient(#fff, #efefef); }
fieldset { min-width: 0; margin: 0 0 10px; padding: 14px 18px 16px 17px; border: 2px solid #dedede; }
fieldset.diag { margin: 0; padding: 15px 17px 14px; }
legend { margin-left: -7px; padding: 0 5px; }
.advice { display: flex; justify-content: space-between; }
.advice p { padding: 2px 0 0 3px; font-size: 21px; line-height: 25px; white-space: nowrap; }
.scroll { display: flex; flex-direction: column; justify-content: space-between; align-items: center; width: 31px; height: 91px; padding: 11px 0 9px; background: #efefef; }
.scroll svg { width: 16px; height: 12px; }
.full { display: flex; align-items: center; gap: 6px; }
input[type="checkbox"] { appearance: none; display: grid; place-items: center; flex: none; width: 26px; height: 26px; margin: 0; border: 2px solid #777; border-radius: 6px; background: #f6f6f6; }
input[type="checkbox"]:checked { border-color: #1560b5; background: #0d5cb6; }
input[type="checkbox"]:checked::after { content: ""; width: 7px; height: 12px; border: solid #b4d6f8; border-width: 0 2px 2px 0; transform: translateY(-1px) rotate(42deg); }
.checks { display: grid; grid-template-rows: repeat(9, 1fr); height: 356px; margin: 26px 0 22px 39px; }
.checks li { display: grid; grid-template-columns: 39px 40px 88px 1fr; align-items: center; white-space: nowrap; }
.checks .sub { padding-left: 40px; }
.checks svg { width: 33px; height: 32px; }
.update { display: flex; align-items: center; width: 196px; height: 47px; margin-left: auto; padding: 3px; border: 2px solid #2f7fb8; border-radius: 7px; background: #fdfdfd; outline: 2px dotted #333; outline-offset: -7px; }
.update svg { width: 40px; height: 38px; }
.update span { flex: 1; padding-right: 8px; text-align: center; }
```
